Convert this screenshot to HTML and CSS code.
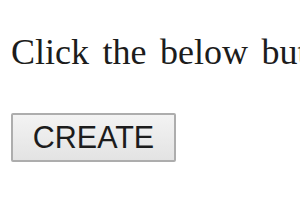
FILE: index.html
```html
<!DOCTYPE html>
<html>
<head>
<meta charset="utf-8">
<link rel="stylesheet" href="styles.css">
</head>
<body>
<p class="intro">Click the below button</p>
<button class="create">CREATE</button>
</body>
</html>
```

FILE: styles.css
```css
html, body {
  margin: 0;
  padding: 0;
  background: #ffffff;
  overflow: hidden;
}
body {
  width: 300px;
  height: 210px;
  padding: 0 0 0 11px;
  box-sizing: border-box;
}
.intro {
  margin: 0;
  padding-top: 32px;
  font-family: "Liberation Serif", "Times New Roman", serif;
  font-size: 36px;
  line-height: 40px;
  word-spacing: 4.5px;
  color: #1c1c1c;
  white-space: nowrap;
  overflow: hidden;
}
.create {
  margin-top: 41px;
  font-family: "Liberation Sans", Arial, sans-serif;
  font-size: 30.5px;
  color: #1c1c1c;
  background: linear-gradient(#f3f3f3, #e3e3e3);
  border: 2px solid #adadad;
  border-radius: 2px;
  width: 165px;
  height: 49px;
  padding: 0;
}
```
